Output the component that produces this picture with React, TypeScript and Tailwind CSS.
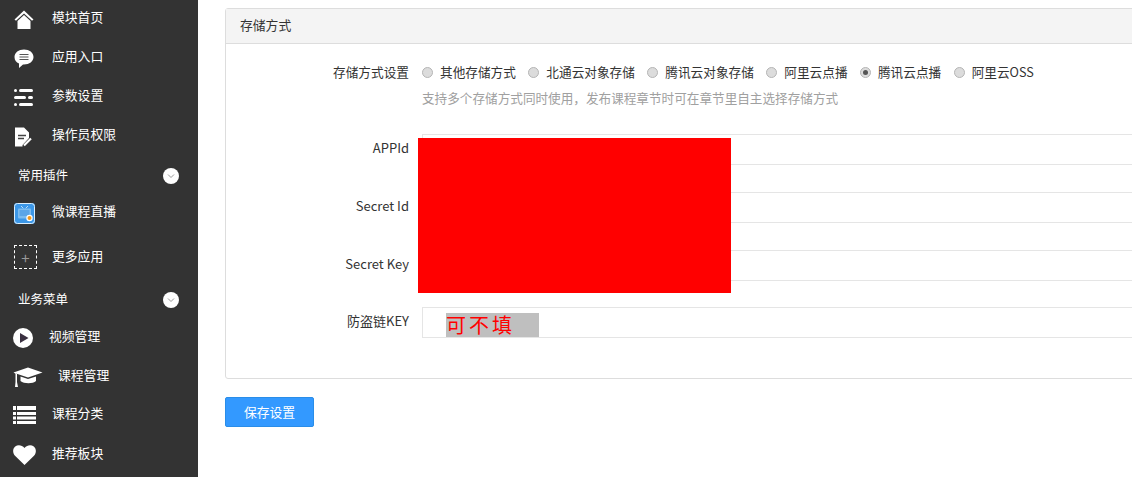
import React from "react";

const font = { fontFamily: '"Noto Sans CJK SC", sans-serif' };

const HomeIcon = () => (
  <svg width="20" height="20" viewBox="0 0 20 20" fill="#fff">
    <path d="M10 0.5 L19.5 9.5 L18 10.8 L10 3.4 L2 10.8 L0.5 9.5 Z" />
    <path d="M3.5 11 L10 5 L16.5 11 V19 H3.5 Z" />
  </svg>
);

const ChatIcon = () => (
  <svg width="20" height="20" viewBox="0 0 20 20">
    <path d="M10 0.5 C15.3 0.5 19.5 3.6 19.5 8 C19.5 12.4 15.3 15.5 10 15.5 L9 15.5 L5 19 L5 14.6 C2.2 13.4 0.5 11 0.5 8 C0.5 3.6 4.7 0.5 10 0.5 Z" fill="#fff" />
    <path d="M5.5 5.5 H14.5 M5.5 8 H14.5 M5.5 10.5 H14.5" stroke="#555" strokeWidth="1.2" />
  </svg>
);

const ListIcon = () => (
  <svg width="20" height="18" viewBox="0 0 20 18" fill="#fff">
    <rect x="0" y="0" width="3" height="3" rx="1.5" />
    <rect x="5" y="0" width="14" height="3" rx="1.5" />
    <rect x="0" y="7" width="12" height="3" rx="1.5" />
    <rect x="14" y="7" width="5" height="3" rx="1.5" />
    <rect x="0" y="14" width="3" height="3" rx="1.5" />
    <rect x="5" y="14" width="14" height="3" rx="1.5" />
  </svg>
);

const DocIcon = () => (
  <svg width="18" height="20" viewBox="0 0 18 20">
    <path d="M1 0.5 H10 L15 5.5 V11 L8.5 18 V19.5 H1 Z" fill="#fff" />
    <path d="M4 8.5 H12 M4 11.5 H10" stroke="#444" strokeWidth="1.4" />
    <path d="M10 18.5 L17 11.5" stroke="#fff" strokeWidth="2.2" />
  </svg>
);

const Chevron = () => (
  <span className="flex h-4 w-4 items-center justify-center rounded-full bg-white">
    <svg width="8" height="6" viewBox="0 0 8 6" fill="none">
      <path d="M1 1.5 L4 4.5 L7 1.5" stroke="#999" strokeWidth="1" />
    </svg>
  </span>
);

const LiveIcon = () => (
  <svg width="22" height="22" viewBox="0 0 22 22">
    <rect x="0" y="0" width="21" height="21" rx="3" fill="#3b97e8" />
    <rect x="0.5" y="0.5" width="20" height="20" rx="3" fill="none" stroke="#dbeefc" />
    <path d="M7 3 L9.5 5.5 M14 3 L11.5 5.5" stroke="#bcdcf7" strokeWidth="1" />
    <rect x="4" y="5.5" width="13" height="10" rx="1" fill="#7cbcf0" />
    <rect x="5.5" y="7" width="10" height="6" fill="#5aa5e8" />
    <circle cx="15.5" cy="15" r="3.2" fill="#fff" />
    <circle cx="15.5" cy="15" r="2" fill="#f39a1e" />
  </svg>
);

const PlayIcon = () => (
  <svg width="20" height="20" viewBox="0 0 20 20">
    <circle cx="10" cy="10" r="10" fill="#fff" />
    <path d="M7 5 L15.5 10 L7 15 Z" fill="#3a3040" />
  </svg>
);

const CapIcon = () => (
  <svg width="30" height="21" viewBox="0 0 30 21" fill="#fff">
    <path d="M15 0.5 L29.5 5.5 L15 10.5 L3 6.5 L3 7 L0.5 5.5 Z" />
    <path d="M7.5 9.5 L15 12 L23 9.5 V14 C20 17 11 17 7.5 14 Z" />
    <path d="M2.5 6.5 H4 V15 L5 20 H2 L2.5 15 Z" />
  </svg>
);

const TableIcon = () => (
  <svg width="23" height="18" viewBox="0 0 23 18" fill="#fff">
    <rect x="0" y="0" width="3" height="4" />
    <rect x="4" y="0" width="19" height="4" />
    <rect x="0" y="6" width="3" height="3" />
    <rect x="4" y="6" width="19" height="3" />
    <rect x="0" y="10.5" width="3" height="3" />
    <rect x="4" y="10.5" width="19" height="3" />
    <rect x="0" y="15" width="3" height="3" />
    <rect x="4" y="15" width="19" height="3" />
  </svg>
);

const HeartIcon = () => (
  <svg width="23" height="20" viewBox="0 0 23 20" fill="#fff">
    <path d="M11.5 20 L2 10.8 C-0.6 8 -0.4 3.6 2.2 1.5 C5 -0.6 9 0 11.5 3 C14 0 18 -0.6 20.8 1.5 C23.4 3.6 23.6 8 21 10.8 Z" />
  </svg>
);

const DashedPlus = () => (
  <span className="flex h-[24px] w-[23px] items-center justify-center border border-dashed border-white text-[15px] leading-none text-[#999]">
    +
  </span>
);

const MenuRow = ({
  icon,
  label,
  iconWidth = "w-[52px]",
  iconPad = "pl-[14px]",
  height = "h-[39px]",
  textClass = "pb-[5px]",
}: {
  icon: React.ReactNode;
  label: string;
  iconWidth?: string;
  iconPad?: string;
  height?: string;
  textClass?: string;
}) => (
  <div className={`flex ${height} items-center`}>
    <div className={`${iconWidth} ${iconPad} flex shrink-0 items-center`}>{icon}</div>
    <span className={`text-[12.8px] text-white ${textClass}`}>{label}</span>
  </div>
);

const MenuHeading = ({ label, height }: { label: string; height: string }) => (
  <div className={`flex ${height} items-center justify-between pl-[18px] pr-[19px]`}>
    <span className="pb-[2px] text-[12.5px] text-white">{label}</span>
    <Chevron />
  </div>
);

const Sidebar = () => (
  <div className="h-[477px] w-[198px] shrink-0 overflow-hidden bg-[#333333]">
    <MenuRow icon={<HomeIcon />} label="模块首页" />
    <MenuRow icon={<ChatIcon />} label="应用入口" />
    <MenuRow icon={<ListIcon />} label="参数设置" />
    <MenuRow icon={<DocIcon />} label="操作员权限" />
    <MenuHeading label="常用插件" height="h-[40px]" />
    <MenuRow icon={<LiveIcon />} label="微课程直播" height="h-[35px]" />
    <MenuRow icon={<DashedPlus />} label="更多应用" height="h-[52px]" textClass="pb-[2px]" />
    <MenuHeading label="业务菜单" height="h-[34px]" />
    <MenuRow icon={<PlayIcon />} label="视频管理" iconWidth="w-[49px]" iconPad="pl-[13px]" height="h-[42px]" />
    <MenuRow icon={<CapIcon />} label="课程管理" iconWidth="w-[58px]" iconPad="pl-[13px]" height="h-[36px]" />
    <MenuRow icon={<TableIcon />} label="课程分类" iconPad="pl-[13px]" height="h-[40px]" />
    <MenuRow icon={<HeartIcon />} label="推荐板块" iconPad="pl-[13px]" height="h-[40px]" />
  </div>
);

const Radio = ({ label, checked }: { label: string; checked?: boolean }) => (
  <label className="flex items-center gap-[7px]">
    <span className="flex h-[11px] w-[11px] items-center justify-center rounded-full border border-[#b5b5b5] bg-[#dcdcdc]">
      {checked && <span className="h-[5px] w-[5px] rounded-full bg-[#555]" />}
    </span>
    <span className="pb-[2px] text-[12.67px] text-[#333]">{label}</span>
  </label>
);

const FieldRow = ({
  label,
  children,
  className,
}: {
  label: string;
  children?: React.ReactNode;
  className: string;
}) => (
  <div className={`flex items-center ${className}`}>
    <div className="w-[183px] shrink-0 pb-[4px] text-right text-[13px] text-[#333]">{label}</div>
    <div className="relative ml-[13px] h-[31px] flex-1 border border-[#e5e5e5] bg-white">{children}</div>
  </div>
);

export default function App() {
  return (
    <div className="flex h-[477px] w-[1132px] overflow-hidden bg-white" style={font}>
      <Sidebar />
      <div className="flex-1 overflow-hidden pl-[27px] pt-[8px]">
        <div className="w-[1000px] rounded-[3px] border border-[#dddddd]">
          <div className="flex h-[35px] items-center border-b border-[#dddddd] bg-[#f4f4f4] pb-[2px] pl-[14px] text-[12.8px] text-[#333]">
            存储方式
          </div>
          <div className="h-[334px] pt-[18px]">
            <div className="flex h-[20px] items-center">
              <div className="w-[183px] shrink-0 pb-[2px] text-right text-[12.67px] text-[#333]">存储方式设置</div>
              <div className="ml-[13px] flex items-center gap-[12.4px]">
                <Radio label="其他存储方式" />
                <Radio label="北通云对象存储" />
                <Radio label="腾讯云对象存储" />
                <Radio label="阿里云点播" />
                <Radio label="腾讯云点播" checked />
                <Radio label="阿里云OSS" />
              </div>
            </div>
            <div className="ml-[196px] mt-[6px] text-[12.62px] leading-[20px] text-[#a0a0a0]">
              支持多个存储方式同时使用，发布课程章节时可在章节里自主选择存储方式
            </div>
            <div className="relative mt-[26px]">
              <FieldRow label="APPId" className="" />
              <FieldRow label="Secret Id" className="mt-[27px]" />
              <FieldRow label="Secret Key" className="mt-[27px]" />
              <FieldRow label="防盗链KEY" className="mt-[26px]">
                <span className="absolute left-[23px] top-[5px] h-[24px] w-[93px] bg-[#bfbfbf] text-[20px] leading-[24px] tracking-[3px] text-[#f00]">
                  可不填
                </span>
              </FieldRow>
              <div className="absolute left-[192px] top-[4px] h-[155px] w-[313px] bg-[#ff0000]" />
            </div>
          </div>
        </div>
        <button className="mt-[18px] flex h-[30px] w-[89px] items-center justify-center rounded-[2px] border border-[#2a8de8] bg-[#3399ff] pb-[1px] text-[12.8px] text-white">
          保存设置
        </button>
      </div>
    </div>
  );
}
